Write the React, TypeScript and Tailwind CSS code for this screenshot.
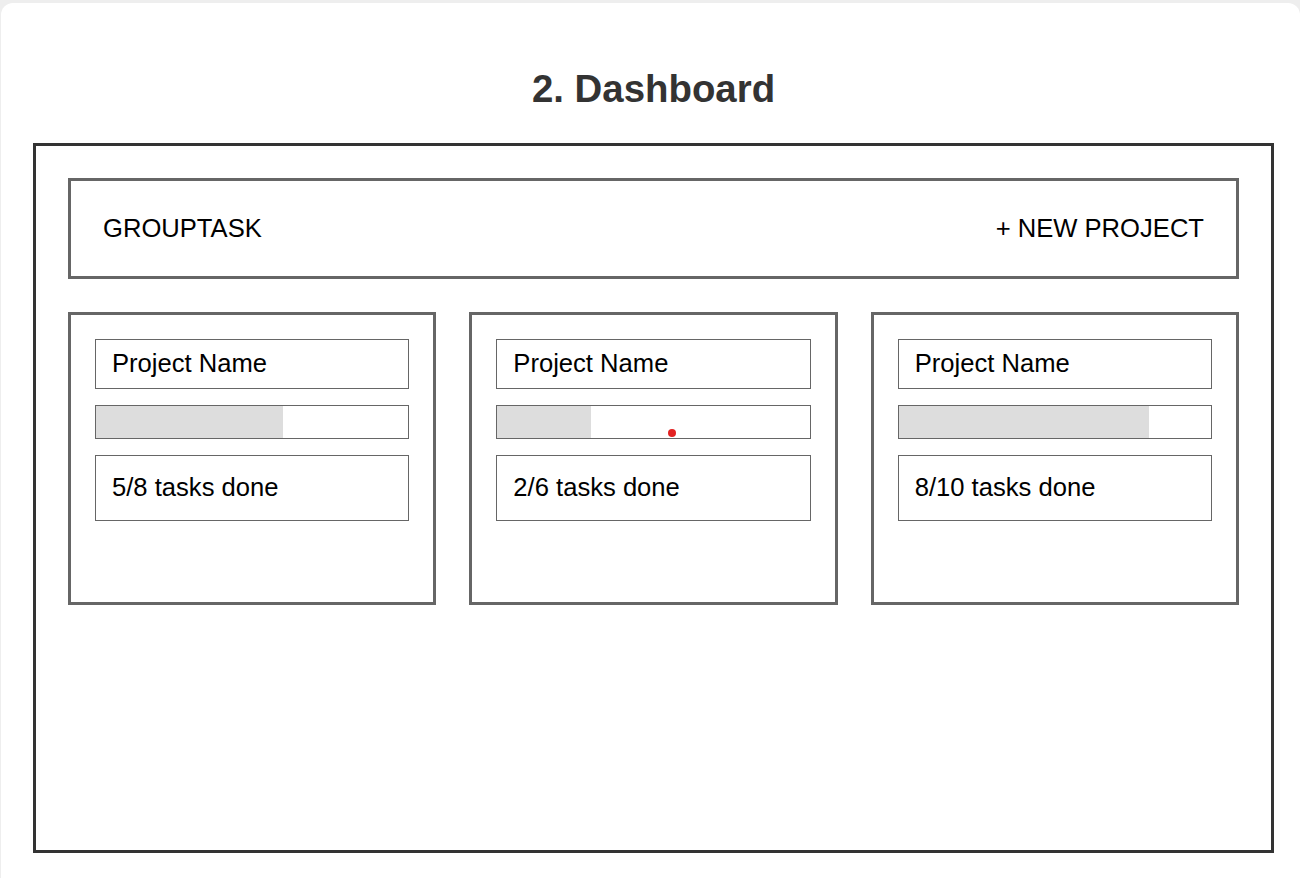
import type { ReactNode } from 'react';

const projects = [
  { name: 'Project Name', done: 5, total: 8, fill: 60 },
  { name: 'Project Name', done: 2, total: 6, fill: 30 },
  { name: 'Project Name', done: 8, total: 10, fill: 80 },
];

export default function App() {
  return (
    <div className="relative min-h-screen bg-[#eeeeee] pl-[1px] pt-[3px] font-['Liberation_Sans',Arial,sans-serif] text-black">
      <div className="h-[900px] rounded-[12px] bg-white pl-[32px] pt-[64px]">
        <h2 className="w-[1241px] text-center text-[38.4px] font-bold leading-[44px] text-[#333333]">2. Dashboard</h2>

        <div className="mt-[32px] h-[710px] w-[1241px] border-[3px] border-[#333333] p-[32px]">
          <header className="flex h-[101px] items-center justify-between border-[3px] border-[#666666] px-[32px] pb-[1px] text-[25.6px] leading-[30px]">
            <span>GROUPTASK</span>
            <span>+ NEW PROJECT</span>
          </header>

          <section className="mt-[33px] grid grid-cols-3 gap-x-[33px]">
            {projects.map((project, i) => (
              <Card key={i}>
                <div className="border border-[#666666] px-[16px] pb-[10px] pt-[8px] text-[25.6px] leading-[30px]">{project.name}</div>
                <div className="mt-[16px] h-[34px] border border-[#666666]">
                  <div className="h-full bg-[#dddddd]" style={{ width: `${project.fill}%` }} />
                </div>
                <div className="mt-[16px] border border-[#666666] px-[16px] pb-[18px] pt-[16px] text-[25.6px] leading-[30px]">
                  {project.done}/{project.total} tasks done
                </div>
              </Card>
            ))}
          </section>
        </div>
      </div>

      <span className="absolute left-[668px] top-[429px] size-[8px] rounded-full bg-[#e32222]" />
    </div>
  );
}

function Card({ children }: { children: ReactNode }) {
  return <article className="h-[293px] border-[3px] border-[#666666] p-[24px]">{children}</article>;
}
